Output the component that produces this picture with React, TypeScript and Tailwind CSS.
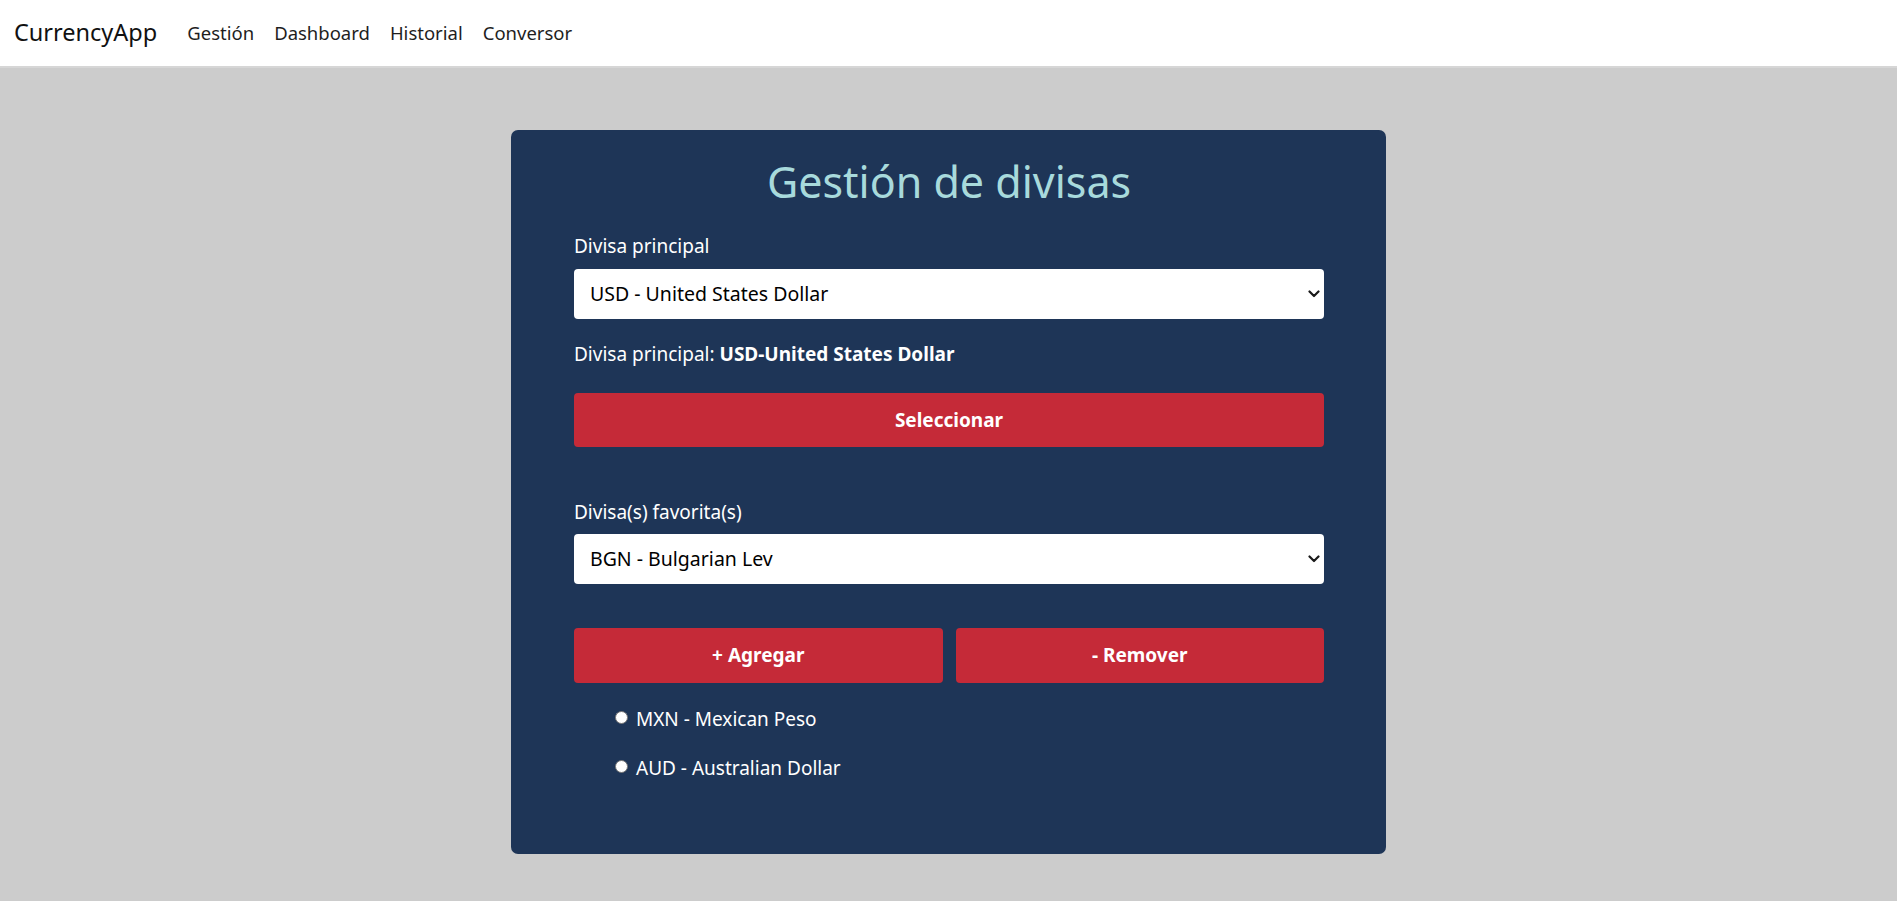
import React from "react";

function Chevron() {
  return (
    <svg
      className="pointer-events-none absolute right-[4px] top-1/2 -translate-y-1/2"
      width="12"
      height="8"
      viewBox="0 0 12 8"
      fill="none"
    >
      <path d="M1.5 1.5 L6 6 L10.5 1.5" stroke="#1a1a1a" strokeWidth="2.2" strokeLinecap="round" strokeLinejoin="round" />
    </svg>
  );
}

function SelectBox({ value, className }: { value: string; className: string }) {
  return (
    <div className={"relative " + className}>
      <select
        defaultValue={value}
        className="block h-[50px] w-full appearance-none rounded-[4px] bg-white pl-[16px] pr-[30px] text-[19.5px] text-black outline-none"
      >
        <option>{value}</option>
      </select>
      <Chevron />
    </div>
  );
}

function Radio({ label }: { label: string }) {
  return (
    <label className="flex items-center text-[19px] leading-[30px] text-white">
      <span className="-mt-[4px] mr-[8px] inline-block h-[13px] w-[13px] rounded-full border border-[#767676] bg-white" />
      {label}
    </label>
  );
}

export default function App() {
  return (
    <div className="min-h-screen bg-[#cccccc] font-['Noto_Sans',sans-serif]">
      <nav className="flex h-[68px] items-center border-b-2 border-[#d6d6d6] bg-white pl-[14px]">
        <span className="text-[23.5px] leading-none text-[#111]">CurrencyApp</span>
        <div className="ml-[20px] flex text-[18.5px] leading-none text-[#1e1e1e]">
          <a className="px-[10px]">Gestión</a>
          <a className="px-[10px]">Dashboard</a>
          <a className="px-[10px]">Historial</a>
          <a className="px-[10px]">Conversor</a>
        </div>
      </nav>
      <main className="pt-[62px]">
        <div className="mx-auto w-[875px] rounded-[7px] bg-[#1e3557] pb-[71px] pl-[63px] pr-[62px] pt-[25px]">
          <h1 className="text-center text-[43px] leading-[54px] text-[#a8dadc]">Gestión de divisas</h1>
          <label className="mt-[22px] block text-[19px] leading-[30px] text-white">Divisa principal</label>
          <SelectBox className="mt-[8px]" value="USD - United States Dollar" />
          <p className="mt-[20px] text-[19px] leading-[30px] text-white">
            Divisa principal: <strong className="font-bold">USD-United States Dollar</strong>
          </p>
          <button className="mt-[24px] block h-[54px] w-full rounded-[4px] bg-[#c52a38] text-[19px] font-bold text-white">
            Seleccionar
          </button>
          <label className="mt-[50px] block text-[19px] leading-[30px] text-white">Divisa(s) favorita(s)</label>
          <SelectBox className="mt-[7px]" value="BGN - Bulgarian Lev" />
          <div className="mt-[44px] grid grid-cols-2 gap-[13px]">
            <button className="h-[55px] rounded-[4px] bg-[#c52a38] text-[19px] font-bold text-white">+ Agregar</button>
            <button className="h-[55px] rounded-[4px] bg-[#c52a38] text-[19px] font-bold text-white">- Remover</button>
          </div>
          <div className="mt-[21px] flex flex-col gap-[19px] pl-[41px]">
            <Radio label="MXN - Mexican Peso" />
            <Radio label="AUD - Australian Dollar" />
          </div>
        </div>
      </main>
    </div>
  );
}
